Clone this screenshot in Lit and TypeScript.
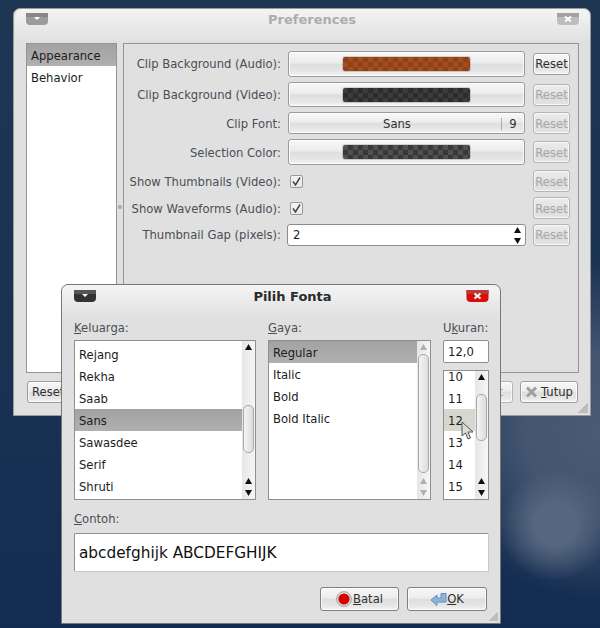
import { LitElement, html, css, svg } from "lit";
import { customElement } from "lit/decorators.js";

const up = html`<svg class="arr" width="7" height="6" viewBox="0 0 7 6"><path d="M3.5 0 L7 6 H0 Z" /></svg>`;
const down = html`<svg class="arr" width="7" height="6" viewBox="0 0 7 6"><path d="M0 0 H7 L3.5 6 Z" /></svg>`;

const capShape = "M0 0 H22 V8 Q22 12 18 12 H4 Q0 12 0 8 Z";
const menuIcon = svg`<path d="M8 4 H14 L11 7 Z" fill="#fff" />`;
const closeIcon = svg`<path d="M8 3.5 L14 8.5 M14 3.5 L8 8.5" stroke="#fff" stroke-width="2" fill="none" />`;

function cap(top: string, bottom: string, icon: unknown, width = 22) {
  return html`
    <svg class="wbtn" width=${width} height="12" viewBox="0 0 22 12">
      <path d=${capShape} fill=${bottom} />
      <path d="M0 0 H22 V4 H0 Z" fill=${top} />
      ${icon}
    </svg>
  `;
}

type PrefRow = { label: string; kind: string; color?: string; active?: boolean; nudge?: boolean };

const prefRows: PrefRow[] = [
  { label: "Clip Background (Audio):", kind: "swatch", color: "orange", active: true },
  { label: "Clip Background (Video):", kind: "swatch", color: "black" },
  { label: "Clip Font:", kind: "font", nudge: true },
  { label: "Selection Color:", kind: "swatch", color: "sel", nudge: true },
  { label: "Show Thumbnails (Video):", kind: "check", nudge: true },
  { label: "Show Waveforms (Audio):", kind: "check", nudge: true },
  { label: "Thumbnail Gap (pixels):", kind: "spin" },
];

@customElement("app-root")
export class AppRoot extends LitElement {
  scrollbar(top: number, height: number, off = false) {
    return html`
      <div class="sb ${off ? "off" : ""}">
        <div class="thumb" style="top:${top}px;height:${height}px"></div>
        ${up}
        <span class="grow"></span>
        <span class="sbpair">${up} ${down}</span>
      </div>
    `;
  }

  list(items: string[], selected: string, cls: string, sel: string) {
    return html`
      <div class="rows ${cls}">
        ${items.map((i) => html`<div class="row ${i === selected ? sel : ""}">${i}</div>`)}
      </div>
    `;
  }

  prefControl(r: PrefRow) {
    if (r.kind === "swatch") {
      return html`<div class="btn wide"><span class="swatch ${r.color}"></span></div>`;
    }
    if (r.kind === "font") {
      return html`<div class="btn wide fontbtn"><span class="fname">Sans</span><span class="fsize">9</span></div>`;
    }
    if (r.kind === "check") {
      return html`<div class="checkcell">
        <span class="check">
          <svg width="11" height="11" viewBox="0 0 11 11"><path d="M2 5.5 L4.5 9 L9 1.5" fill="none" stroke="#444" stroke-width="1.5" /></svg>
        </span>
      </div>`;
    }
    return html`<div class="spin"><span>2</span><span class="spinarrows">${up}${down}</span></div>`;
  }

  render() {
    return html`
      <div class="win pref">
        <div class="titlebar">
          ${cap("#868686", "#9c9c9c", menuIcon)}
          <span class="title">Preferences</span>
          ${cap("#a2a2a2", "#bcbcbc", closeIcon)}
        </div>
        <div class="prefbody">
          <div class="side">
            <div class="row picked">Appearance</div>
            <div class="row">Behavior</div>
          </div>
          <span class="handle"></span>
          <div class="frame">
            ${prefRows.map(
              (r) => html`
                <div class="plabel ${r.nudge ? "nudge" : ""}">${r.label}</div>
                ${this.prefControl(r)}
                <div class="resetcell">
                  <div class="btn reset ${r.active ? "" : "dis"} ${r.nudge ? "nudge" : ""}">Reset</div>
                </div>
              `
            )}
          </div>
        </div>
        <div class="prefbtns">
          <div class="btn bottom first">Reset</div>
          <span class="grow"></span>
          <div class="btn bottom dis revert">Revert</div>
          <div class="btn bottom tutup">
            <svg width="13" height="12" viewBox="0 0 13 12"><path d="M2 1.5 L11 10.5 M11 1.5 L2 10.5" stroke="#a0a0a0" stroke-width="3" fill="none" /></svg>
            <span><u>T</u>utup</span>
          </div>
        </div>
        <span class="grip"></span>
      </div>

      <div class="win dialog">
        <div class="titlebar">
          ${cap("#555", "#333", menuIcon)}
          <span class="title">Pilih Fonta</span>
          ${cap("#b93a3a", "#d60f0c", closeIcon, 23)}
        </div>
        <div class="cols">
          <div class="lbl top"><u>K</u>eluarga:</div>
          <div class="lbl top"><u>G</u>aya:</div>
          <div class="lbl top">U<u>k</u>uran:</div>

          <div class="listbox">
            ${this.list(["Rejang", "Rekha", "Saab", "Sans", "Sawasdee", "Serif", "Shruti"], "Sans", "fam", "picked")}
            ${this.scrollbar(64, 48)}
          </div>
          <div class="listbox">
            ${this.list(["Regular", "Italic", "Bold", "Bold Italic"], "Regular", "", "picked")}
            ${this.scrollbar(13, 119, true)}
          </div>
          <div class="sizecol">
            <div class="entry">12,0</div>
            <div class="listbox grow">
              ${this.list(["10", "11", "12", "13", "14", "15"], "12", "sizes", "hover")}
              ${this.scrollbar(23, 47)}
            </div>
          </div>
        </div>
        <div class="lbl contoh"><u>C</u>ontoh:</div>
        <div class="preview">abcdefghijk ABCDEFGHIJK</div>
        <div class="dlgbtns">
          <div class="btn dlg batal">
            <svg width="16" height="16" viewBox="0 0 16 16">
              <circle cx="8" cy="8" r="7.3" fill="#e4e4e4" stroke="#9a9a9a" />
              <circle cx="8" cy="8" r="5.6" fill="#d40000" />
            </svg>
            <span><u>B</u>atal</span>
          </div>
          <div class="btn dlg okbtn">
            <svg width="17" height="15" viewBox="0 0 17 15">
              <path d="M11 1.5 H16 V10 H7 V13.5 L1 8 L7 3 V6 H11 Z" fill="#8fb3dc" stroke="#5f8fc4" stroke-linejoin="round" />
            </svg>
            <span><u>O</u>K</span>
          </div>
        </div>
        <span class="grip"></span>
      </div>

      <svg class="cursor" width="14" height="20" viewBox="0 0 14 20">
        <path d="M1 1 V15 L4.5 12 L7 18 L9.5 17 L7 11 H12 Z" fill="#d8dcd2" stroke="#555" stroke-width="1" />
      </svg>
    `;
  }

  static styles = css`
    :host {
      display: block;
      position: relative;
      width: 600px;
      height: 628px;
      overflow: hidden;
      font-family: "DejaVu Sans", sans-serif;
      font-size: 11.6px;
      color: #1c1c1c;
      background:
        radial-gradient(circle at 555px 525px, #56677f 0, #56677f 20px, rgba(86, 103, 127, 0) 56px),
        radial-gradient(ellipse 170px 170px at 600px 430px, #4a5b73 0, #43556f 45%, rgba(67, 85, 111, 0) 100%),
        linear-gradient(#1f3653, #1a3252 55%, #132c52);
    }

    .win {
      position: absolute;
      box-sizing: border-box;
      background: #e0e0e0;
      border: 1px solid #8a8a8a;
      border-radius: 7px 7px 0 0;
    }

    .pref {
      left: 13px;
      top: 8px;
      width: 578px;
      height: 408px;
      border-color: #9a9a9a;
      padding: 0 11px 0 12px;
      display: flex;
      flex-direction: column;
    }

    .dialog {
      left: 61px;
      top: 284px;
      width: 440px;
      height: 340px;
      padding: 0 12px;
      border-color: #777;
    }

    .titlebar {
      height: 34px;
      margin: 0 -11px;
      padding: 4px 11px 0;
      box-sizing: border-box;
      display: flex;
      align-items: flex-start;
      justify-content: space-between;
      background: linear-gradient(#f4f4f4, #e0e0e0);
      border-radius: 7px 7px 0 0;
    }

    .dialog .titlebar {
      margin: 0 -12px;
      padding: 5px 11px 0 12px;
    }

    .wbtn {
      display: block;
      flex: none;
    }

    .title {
      font-weight: bold;
      font-size: 13px;
      line-height: 13px;
      margin-left: 19px;
      color: #adadad;
    }

    .dialog .title {
      margin-left: 23px;
      color: #2a2a2a;
    }

    .prefbody {
      display: flex;
      height: 330px;
      flex: none;
    }

    .side {
      width: 91px;
      box-sizing: border-box;
      background: #fff;
      border: 1px solid #949494;
    }

    .handle {
      width: 6px;
      background: radial-gradient(circle at 3px 164px, #aaa 0, #aaa 1.5px, transparent 2.5px);
    }

    .frame {
      width: 456px;
      box-sizing: border-box;
      border: 1px solid #949494;
      padding: 7px 0 0 5px;
      display: grid;
      grid-template-columns: 152px 237px 38px;
      grid-template-rows: 26px 25px 22px 26px 22px 22px 22px;
      column-gap: 7px;
      row-gap: 5px;
      align-content: start;
      align-items: center;
    }

    .frame > .resetcell {
      margin-left: 1px;
    }

    .plabel {
      text-align: right;
      white-space: nowrap;
      color: #4a4e55;
    }

    .nudge {
      padding-top: 2px;
    }

    .row {
      height: 22px;
      line-height: 24px;
      padding-left: 4px;
      white-space: nowrap;
    }

    .picked {
      background: linear-gradient(#a2a2a2, #b0b0b0);
    }

    .hover {
      background: #d5d8ce;
    }

    .btn {
      box-sizing: border-box;
      border: 1px solid #9b9b9b;
      border-radius: 3px;
      display: flex;
      align-items: center;
      justify-content: center;
      color: #303030;
      box-shadow: inset 0 0 0 1px rgba(255, 255, 255, 0.7);
      background: linear-gradient(#f8f8f8, #ececec 45%, #dedede 52%, #e6e6e6 80%, #f4f4f4);
    }

    .wide {
      height: 100%;
    }

    .swatch {
      width: 127px;
      height: 14px;
      border-radius: 2px;
      background-size: 10px 10px;
      box-shadow: 0 0 0 1px rgba(0, 0, 0, 0.14);
    }

    .orange {
      background-image: conic-gradient(#a64d20 25%, #8f411b 0 50%, #a64d20 0 75%, #8f411b 0);
    }

    .black {
      background-image: conic-gradient(#2c2c2c 25%, #3c3c3c 0 50%, #2c2c2c 0 75%, #3c3c3c 0);
    }

    .sel {
      background-image: conic-gradient(#383838 25%, #505050 0 50%, #383838 0 75%, #505050 0);
    }

    .fontbtn {
      justify-content: flex-start;
      padding-top: 2px;
    }

    .fname {
      flex: 1;
      text-align: center;
      padding-left: 4px;
    }

    .fsize {
      width: 22px;
      text-align: center;
      border-left: 1px solid #aaa;
      line-height: 12px;
    }

    .checkcell {
      display: flex;
      padding-left: 2px;
    }

    .check {
      box-sizing: border-box;
      width: 13px;
      height: 13px;
      border: 1px solid #9a9a9a;
      border-radius: 2px;
      background: linear-gradient(#f4f4f4, #e8e8e8);
      display: flex;
    }

    .check svg {
      display: block;
    }

    .spin {
      box-sizing: border-box;
      height: 22px;
      margin: 0 -1px;
      border: 1px solid #8c8c8c;
      border-radius: 3px;
      background: #fff;
      display: flex;
      align-items: center;
      justify-content: space-between;
      padding: 0 4px 0 5px;
    }

    .spinarrows {
      display: flex;
      flex-direction: column;
      gap: 5px;
    }

    .arr {
      display: block;
      fill: #111;
      flex: none;
    }

    .reset {
      height: 22px;
    }

    .dis {
      color: #a8a8a8;
      border-color: #b4b4b4;
    }

    .dis.reset {
      background: linear-gradient(#ececec, #e2e2e2 50%, #dadada 55%, #e4e4e4);
    }

    .prefbtns {
      display: flex;
      gap: 7px;
      margin-top: 8px;
    }

    .bottom {
      height: 22px;
      padding: 0 4px;
    }

    .first {
      margin-left: 1px;
    }

    .revert {
      width: 58px;
    }

    .tutup {
      width: 58px;
      gap: 3px;
      margin-right: 1px;
      padding: 0;
    }

    .grow {
      flex: 1;
    }

    .grip {
      position: absolute;
      right: 2px;
      bottom: 2px;
      width: 10px;
      height: 10px;
      background: linear-gradient(135deg, transparent 50%, #bdbdbd 50%);
    }

    .cols {
      display: grid;
      grid-template-columns: 182px 163px 46px;
      grid-template-rows: 21px 160px;
      column-gap: 12px;
    }

    .lbl {
      line-height: 16px;
      color: #4a4e55;
    }

    .lbl.top {
      line-height: 18px;
    }

    .listbox {
      box-sizing: border-box;
      display: flex;
      border: 1px solid #8f8f8f;
      background: #fff;
      overflow: hidden;
    }

    .rows {
      flex: 1;
      min-width: 0;
      overflow: hidden;
    }

    .fam {
      padding-top: 2px;
    }

    .sizes {
      margin-top: -6px;
    }

    .sb {
      width: 13px;
      flex: none;
      box-sizing: border-box;
      position: relative;
      display: flex;
      flex-direction: column;
      align-items: center;
      padding: 3px 0;
      background: linear-gradient(90deg, #e6e6e6, #f6f6f6);
    }

    .sbpair {
      display: flex;
      flex-direction: column;
      gap: 6px;
    }

    .off .arr {
      fill: #b0b0b0;
    }

    .thumb {
      position: absolute;
      left: 1px;
      right: 1px;
      box-sizing: border-box;
      border: 1px solid #a8a8a8;
      border-radius: 5px;
      background: linear-gradient(90deg, #f4f4f4, #dcdcdc);
    }

    .sizecol {
      display: flex;
      flex-direction: column;
      gap: 7px;
    }

    .entry {
      box-sizing: border-box;
      height: 23px;
      border: 1px solid #8f8f8f;
      border-radius: 2px;
      background: #fff;
      padding-left: 4px;
      line-height: 23px;
    }

    .contoh {
      margin-top: 11px;
    }

    .preview {
      box-sizing: border-box;
      height: 39px;
      margin-top: 6px;
      width: 415px;
      border: 1px solid #8f8f8f;
      border-bottom-color: #c8c8c8;
      border-right-color: #c8c8c8;
      border-radius: 2px;
      background: #fff;
      padding-left: 4px;
      line-height: 38px;
      font-size: 15.3px;
      color: #111;
      white-space: nowrap;
    }

    .dlgbtns {
      display: flex;
      justify-content: flex-end;
      gap: 8px;
      margin-top: 15px;
      padding-right: 1px;
    }

    .dlg {
      height: 24px;
      gap: 1px;
      border-color: #808080;
    }

    .batal {
      width: 79px;
    }

    .okbtn {
      width: 80px;
      gap: 0;
    }

    .cursor {
      position: absolute;
      left: 461px;
      top: 421px;
    }
  `;
}
